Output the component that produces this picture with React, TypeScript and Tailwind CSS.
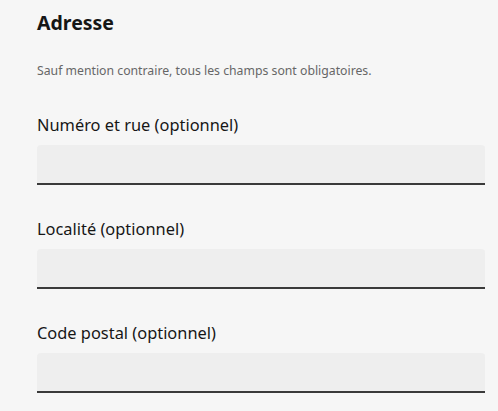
const fields = ['Numéro et rue (optionnel)', 'Localité (optionnel)', 'Code postal (optionnel)'];

export default function App() {
  return (
    <div
      className="min-h-screen bg-[#f6f6f6] pl-[37px] pr-[13px] pt-[9px] text-[#161616]"
      style={{ fontFamily: '"Noto Sans", Arial, sans-serif' }}
    >
      <h2 className="text-[19.5px] font-bold leading-[28px]">Adresse</h2>
      <p className="mt-[24px] text-[12.25px] leading-[20px] text-[#666666]">
        Sauf mention contraire, tous les champs sont obligatoires.
      </p>
      <div className="mt-[32px] flex flex-col gap-[32px]">
        {fields.map((label) => (
          <div key={label} className="flex flex-col">
            <label className="text-[16.4px] leading-[24px]">{label}</label>
            <input
              type="text"
              className="mt-[8px] h-[40px] w-full rounded-t-[4px] bg-[#eeeeee] px-4 shadow-[inset_0_-2px_0_0_#3a3a3a] outline-none"
            />
          </div>
        ))}
      </div>
    </div>
  );
}
